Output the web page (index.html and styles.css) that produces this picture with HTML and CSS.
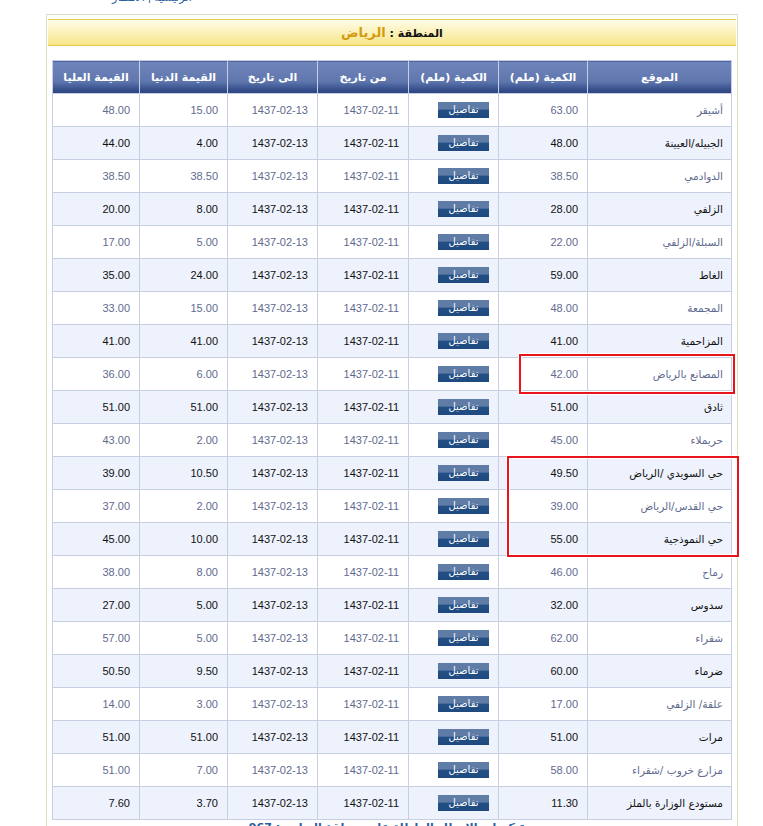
FILE: index.html
```html
<!DOCTYPE html>
<html lang="ar" dir="rtl">
<head>
    <meta charset="UTF-8">
    <title>كميات الأمطار - منطقة الرياض</title>
    <link rel="stylesheet" href="styles.css">
</head>
<body>
    <div class="toplinks"><div class="toplinks-inner"><a href="#">الرئيسية</a> | <a href="#">الأمطار</a></div></div>

    <div class="box">
        <div class="region-title">المنطقة : <span class="region-name">الرياض</span></div>

        <table class="rain">
            <colgroup>
                <col class="c-site"><col class="c-qty"><col class="c-btn"><col class="c-date"><col class="c-date2"><col class="c-min"><col class="c-max">
            </colgroup>
            <thead>
                <tr>
                    <th>الموقع</th>
                    <th>الكمية (ملم)</th>
                    <th>الكمية (ملم)</th>
                    <th>من تاريخ</th>
                    <th>الى تاريخ</th>
                    <th>القيمة الدنيا</th>
                    <th>القيمة العليا</th>
                </tr>
            </thead>
            <tbody>
                <tr><td>أشيقر</td><td>63.00</td><td><a class="btn" href="#">تفاصيل</a></td><td>1437-02-11</td><td>1437-02-13</td><td>15.00</td><td>48.00</td></tr>
                <tr><td>الجبيله/العيينة</td><td>48.00</td><td><a class="btn" href="#">تفاصيل</a></td><td>1437-02-11</td><td>1437-02-13</td><td>4.00</td><td>44.00</td></tr>
                <tr><td>الدوادمي</td><td>38.50</td><td><a class="btn" href="#">تفاصيل</a></td><td>1437-02-11</td><td>1437-02-13</td><td>38.50</td><td>38.50</td></tr>
                <tr><td>الزلفي</td><td>28.00</td><td><a class="btn" href="#">تفاصيل</a></td><td>1437-02-11</td><td>1437-02-13</td><td>8.00</td><td>20.00</td></tr>
                <tr><td>السبلة/الزلفي</td><td>22.00</td><td><a class="btn" href="#">تفاصيل</a></td><td>1437-02-11</td><td>1437-02-13</td><td>5.00</td><td>17.00</td></tr>
                <tr><td>الغاط</td><td>59.00</td><td><a class="btn" href="#">تفاصيل</a></td><td>1437-02-11</td><td>1437-02-13</td><td>24.00</td><td>35.00</td></tr>
                <tr><td>المجمعة</td><td>48.00</td><td><a class="btn" href="#">تفاصيل</a></td><td>1437-02-11</td><td>1437-02-13</td><td>15.00</td><td>33.00</td></tr>
                <tr><td>المزاحمية</td><td>41.00</td><td><a class="btn" href="#">تفاصيل</a></td><td>1437-02-11</td><td>1437-02-13</td><td>41.00</td><td>41.00</td></tr>
                <tr><td>المصانع بالرياض</td><td>42.00</td><td><a class="btn" href="#">تفاصيل</a></td><td>1437-02-11</td><td>1437-02-13</td><td>6.00</td><td>36.00</td></tr>
                <tr><td>ثادق</td><td>51.00</td><td><a class="btn" href="#">تفاصيل</a></td><td>1437-02-11</td><td>1437-02-13</td><td>51.00</td><td>51.00</td></tr>
                <tr><td>حريملاء</td><td>45.00</td><td><a class="btn" href="#">تفاصيل</a></td><td>1437-02-11</td><td>1437-02-13</td><td>2.00</td><td>43.00</td></tr>
                <tr><td>حي السويدي /الرياض</td><td>49.50</td><td><a class="btn" href="#">تفاصيل</a></td><td>1437-02-11</td><td>1437-02-13</td><td>10.50</td><td>39.00</td></tr>
                <tr><td>حي القدس/الرياض</td><td>39.00</td><td><a class="btn" href="#">تفاصيل</a></td><td>1437-02-11</td><td>1437-02-13</td><td>2.00</td><td>37.00</td></tr>
                <tr><td>حي النموذجية</td><td>55.00</td><td><a class="btn" href="#">تفاصيل</a></td><td>1437-02-11</td><td>1437-02-13</td><td>10.00</td><td>45.00</td></tr>
                <tr><td>رماح</td><td>46.00</td><td><a class="btn" href="#">تفاصيل</a></td><td>1437-02-11</td><td>1437-02-13</td><td>8.00</td><td>38.00</td></tr>
                <tr><td>سدوس</td><td>32.00</td><td><a class="btn" href="#">تفاصيل</a></td><td>1437-02-11</td><td>1437-02-13</td><td>5.00</td><td>27.00</td></tr>
                <tr><td>شقراء</td><td>62.00</td><td><a class="btn" href="#">تفاصيل</a></td><td>1437-02-11</td><td>1437-02-13</td><td>5.00</td><td>57.00</td></tr>
                <tr><td>ضرماء</td><td>60.00</td><td><a class="btn" href="#">تفاصيل</a></td><td>1437-02-11</td><td>1437-02-13</td><td>9.50</td><td>50.50</td></tr>
                <tr><td>علقة/ الزلفي</td><td>17.00</td><td><a class="btn" href="#">تفاصيل</a></td><td>1437-02-11</td><td>1437-02-13</td><td>3.00</td><td>14.00</td></tr>
                <tr><td>مرات</td><td>51.00</td><td><a class="btn" href="#">تفاصيل</a></td><td>1437-02-11</td><td>1437-02-13</td><td>51.00</td><td>51.00</td></tr>
                <tr><td>مزارع خروب /شقراء</td><td>58.00</td><td><a class="btn" href="#">تفاصيل</a></td><td>1437-02-11</td><td>1437-02-13</td><td>7.00</td><td>51.00</td></tr>
                <tr><td>مستودع الوزارة بالملز</td><td>11.30</td><td><a class="btn" href="#">تفاصيل</a></td><td>1437-02-11</td><td>1437-02-13</td><td>3.70</td><td>7.60</td></tr>
            </tbody>
        </table>

        <div class="total">مجموع كميات الامطار الهاطلة على منطقة الرياض : 967</div>
    </div>

    <!-- red annotation boxes drawn over the table -->
    <div class="mark mark-1"></div>
    <div class="mark mark-2"></div>
</body>
</html>
```
FILE: styles.css
```css
body { margin: 0; background: #fff; font-family: "Liberation Sans", "DejaVu Sans", sans-serif; font-size: 11px; color: #000; }
.toplinks { height: 14px; overflow: hidden; direction: ltr; padding-left: 112px; }
.toplinks-inner { margin-top: -9px; line-height: 12px; font-size: 11px; color: #2a5d9f; }
.toplinks a { color: #2a5d9f; text-decoration: none; }

.box { width: 688px; margin: 0 auto 0 46px; border: 1px solid #d7e0c2; border-bottom: none; padding: 4px 1px 0; height: 900px; }
.region-title { height: 25px; line-height: 25px; text-align: center; border-top: 1px solid #e5c84c; border-bottom: 1px solid #e5c84c; background: linear-gradient(#fffcea, #f6e688); font-family: "DejaVu Sans", sans-serif; font-size: 11px; font-weight: bold; color: #111; }
.region-name { color: #d49a12; font-size: 13px; }

.rain { width: 679px; margin: 14px 4px 0 auto; border-collapse: collapse; table-layout: fixed; border: 1px solid #c7cde2; }
.c-site { width: 144px; }
.c-qty { width: 89px; }
.c-btn { width: 90px; }
.c-date { width: 91px; }
.c-date2 { width: 90px; }
.c-min { width: 88px; }
.c-max { width: 87px; }

.rain th { height: 32px; padding: 0; color: #fff; font-family: "DejaVu Sans", sans-serif; font-size: 11px; font-weight: bold; text-align: center; border: 1px solid #c7cde2; background: linear-gradient(#6f84ba 0%, #6077ae 62%, #3b5490 85%, #2b4480 100%); }
.rain td { height: 32px; padding: 0 9px 0 4px; text-align: right; border: 1px solid #c9cfe2; color: #5f6a8f; white-space: nowrap; }
.rain td:first-child { font-family: "DejaVu Sans", sans-serif; font-size: 10.5px; padding-right: 8px; }
.rain tbody tr:nth-child(even) td { background: #eef2fd; color: #111; }

.btn { display: inline-block; width: 51px; height: 16px; line-height: 16px; text-align: center; color: #fff; text-decoration: none; font-family: "DejaVu Sans", sans-serif; font-size: 10px; vertical-align: middle; background: linear-gradient(#5e7ca5 0%, #5e7ca5 45%, #244f85 50%, #1f4a80 100%); }

.total { text-align: center; margin-top: 1px; padding-left: 20px; font-family: "DejaVu Sans", sans-serif; font-size: 11px; font-weight: bold; color: #2a5d9f; }

.mark { position: absolute; border: 2px solid #e8141b; box-shadow: 0 0 0 1px #fff, inset 0 0 0 1px #fff; }
.mark-1 { left: 519px; top: 354px; width: 212px; height: 36px; }
.mark-2 { left: 507px; top: 456px; width: 228px; height: 97px; }
```
